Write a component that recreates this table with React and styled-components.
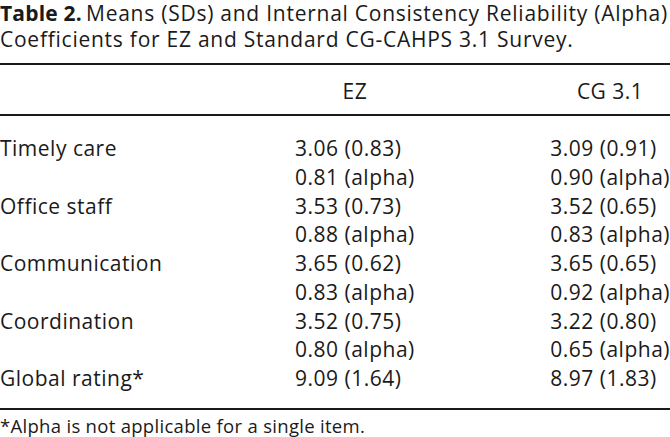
import React from 'react';
import styled, { createGlobalStyle } from 'styled-components';

const GlobalStyle = createGlobalStyle`
  html, body {
    margin: 0;
    padding: 0;
    background: #ffffff;
  }
  body {
    font-family: "Open Sans", Lato, sans-serif;
    color: #1a1a1a;
    letter-spacing: 0.5px;
  }
`;

const Page = styled.div`
  width: 670px;
  height: 437px;
  overflow: hidden;
`;

const Caption = styled.div`
  font-size: 21px;
  line-height: 26px;
  letter-spacing: 0.75px;
`;

const CaptionLine = styled.div`
  white-space: nowrap;
`;

const Label = styled.b`
  font-weight: 700;
  letter-spacing: 0.2px;
  margin-right: 4px;
`;

const Grid = styled.div`
  margin-top: 11px;
  display: grid;
  grid-template-columns: 295px max-content 1fr max-content;
  grid-auto-rows: 28.75px;
  border-top: 2px solid #1a1a1a;
  border-bottom: 2px solid #1a1a1a;
  padding: 11.5px 0 14.75px;
  font-size: 21px;
  line-height: 28.75px;
`;

const Rule = styled.div`
  grid-column: 1 / -1;
  height: 2px;
  background: #1a1a1a;
  margin: 8.75px 0 9.5px;
  align-self: start;
`;

const Cell = styled.div`
  white-space: nowrap;
  text-align: ${(p) => (p.$head ? 'center' : 'left')};
  grid-column: ${(p) => p.$col};
`;

const Note = styled.p`
  margin: 3px 0 0;
  font-size: 18.5px;
  line-height: 26px;
  letter-spacing: 0.3px;
`;

const rows = [
  ['Timely care', '3.06 (0.83)', '3.09 (0.91)'],
  ['', '0.81 (alpha)', '0.90 (alpha)'],
  ['Office staff', '3.53 (0.73)', '3.52 (0.65)'],
  ['', '0.88 (alpha)', '0.83 (alpha)'],
  ['Communication', '3.65 (0.62)', '3.65 (0.65)'],
  ['', '0.83 (alpha)', '0.92 (alpha)'],
  ['Coordination', '3.52 (0.75)', '3.22 (0.80)'],
  ['', '0.80 (alpha)', '0.65 (alpha)'],
  ['Global rating*', '9.09 (1.64)', '8.97 (1.83)'],
];

export default function App() {
  return (
    <Page>
      <GlobalStyle />
      <Caption>
        <CaptionLine>
          <Label>Table 2.</Label>
          <span>Means (SDs) and Internal Consistency Reliability (Alpha)</span>
        </CaptionLine>
        <CaptionLine>Coefficients for EZ and Standard CG-CAHPS 3.1 Survey.</CaptionLine>
      </Caption>
      <Grid>
        <Cell $head $col={2}>EZ</Cell>
        <Cell $head $col={4}>CG 3.1</Cell>
        <Rule />
        {rows.map((r, i) => (
          <React.Fragment key={i}>
            <Cell $col={1}>{r[0]}</Cell>
            <Cell $col={2}>{r[1]}</Cell>
            <Cell $col={4}>{r[2]}</Cell>
          </React.Fragment>
        ))}
      </Grid>
      <Note>*Alpha is not applicable for a single item.</Note>
    </Page>
  );
}
